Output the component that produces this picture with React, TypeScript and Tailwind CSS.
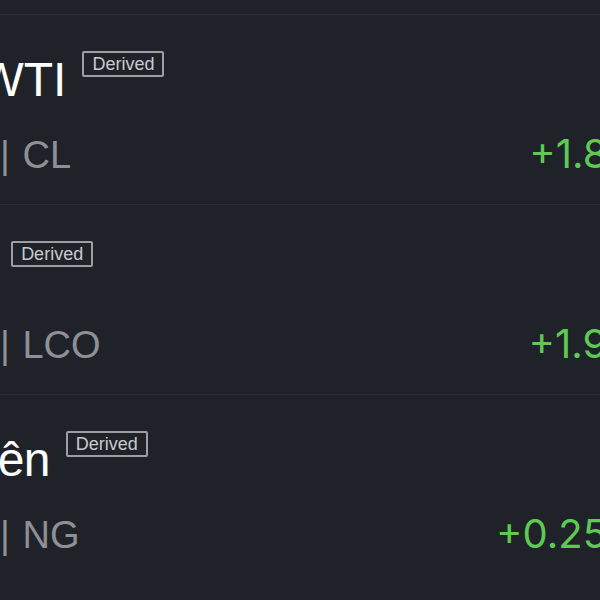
import React from 'react';

type Item = {
  name: string;
  nameClass: string;
  group: string;
  code: string;
  change: string;
};

const items: Item[] = [
  { name: 'Dầu thô WTI', nameClass: '', group: 'Năng lượng', code: 'CL', change: '+1.85%' },
  { name: 'Dầu Brent', nameClass: 'tracking-[-2px]', group: 'Năng lượng', code: 'LCO', change: '+1.92%' },
  { name: 'Khí tự nhiên', nameClass: 'tracking-[-0.75px]', group: 'Năng lượng', code: 'NG', change: '+0.253%' },
];

function Row({ item }: { item: Item }) {
  return (
    <div className="h-[190px] border-t border-[#2a2d35] pt-[36px]">
      <div className="flex items-start">
        <span className={`mt-[1px] text-[48px] leading-[56px] text-white whitespace-nowrap ${item.nameClass}`}>{item.name}</span>
        <span className="ml-[16px] inline-flex h-[26px] items-center rounded-[2px] border-2 border-[#9c9ea3] px-[8px] text-[18px] leading-[21px] text-[#c9cacd]">
          Derived
        </span>
      </div>
      <div className="mt-[24px] flex items-baseline justify-between">
        <span className="text-[38px] leading-[44px] text-[#8f9096] whitespace-nowrap">
          <span className="tracking-[-1px]">{item.group}</span> | <span className="ml-[2px]">{item.code}</span>
        </span>
        <span className="font-['Inter'] text-[40px] leading-[44px] text-[#5ec953] whitespace-nowrap">{item.change}</span>
      </div>
    </div>
  );
}

export default function App() {
  return (
    <div
      className="h-[600px] w-[600px] overflow-hidden bg-[#1f2229]"
      style={{ fontFamily: '"Liberation Sans", Arial, sans-serif' }}
    >
      <div className="-ml-[203px] w-[874px] pt-[14px]">
        {items.map((item) => (
          <Row key={item.code} item={item} />
        ))}
      </div>
    </div>
  );
}
